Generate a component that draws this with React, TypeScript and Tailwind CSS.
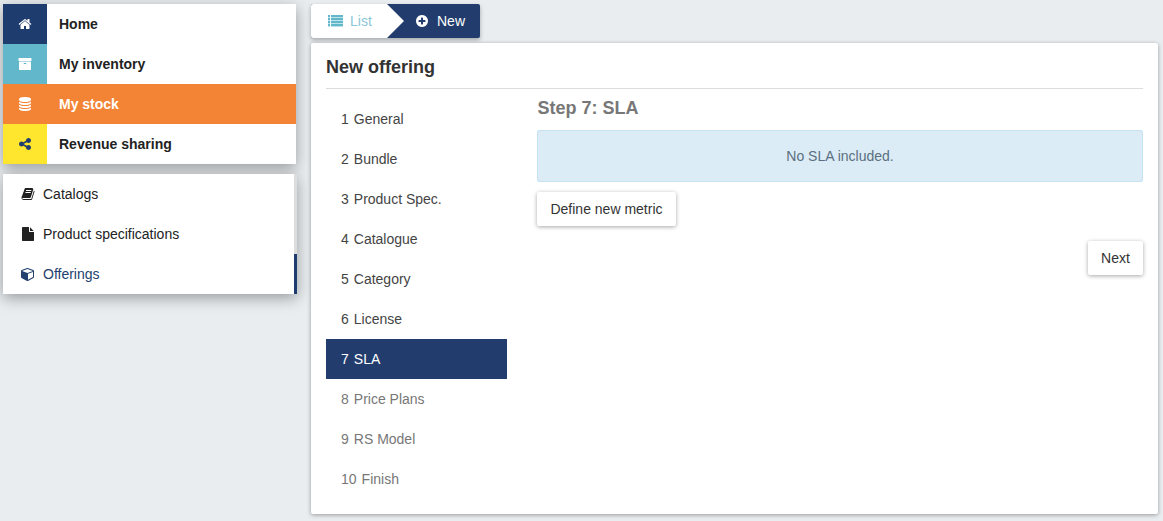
import React from "react";

// FontAwesome 4 glyphs, all on the 1792 grid
const GLYPHS = {
  home: "M1472 992v480q0 26-19 45t-45 19h-384v-384h-256v384h-384q-26 0-45-19t-19-45v-480q0-1 .5-3t.5-3l575-474 575 474q1 2 1 6zm223-69l-62 74q-8 9-21 11h-3q-13 0-21-7l-692-577-692 577q-12 8-24 7-13-2-21-11l-62-74q-8-10-7-23.5t11-21.5l719-599q32-26 76-26t76 26l244 204v-195q0-14 9-23t23-9h192q14 0 23 9t9 23v408l219 182q10 8 11 21.5t-7 23.5z",
  archive: "M1088 832q0-26-19-45t-45-19h-256q-26 0-45 19t-19 45 19 45 45 19h256q26 0 45-19t19-45zm576-192v960q0 26-19 45t-45 19h-1408q-26 0-45-19t-19-45v-960q0-26 19-45t45-19h1408q26 0 45 19t19 45zm64-448v256q0 26-19 45t-45 19h-1536q-26 0-45-19t-19-45v-256q0-26 19-45t45-19h1536q26 0 45 19t19 45z",
  database: "M896 768q237 0 443-43t325-127v170q0 69-103 128t-280 93.5-385 34.5-385-34.5-280-93.5-103-128v-170q119 84 325 127t443 43zm0 768q237 0 443-43t325-127v170q0 69-103 128t-280 93.5-385 34.5-385-34.5-280-93.5-103-128v-170q119 84 325 127t443 43zm0-384q237 0 443-43t325-127v170q0 69-103 128t-280 93.5-385 34.5-385-34.5-280-93.5-103-128v-170q119 84 325 127t443 43zm0-1152q208 0 385 34.5t280 93.5 103 128v128q0 69-103 128t-280 93.5-385 34.5-385-34.5-280-93.5-103-128v-128q0-69 103-128t280-93.5 385-34.5z",
  shareAlt: "M1344 1024q133 0 226.5 93.5t93.5 226.5-93.5 226.5-226.5 93.5-226.5-93.5-93.5-226.5q0-12 2-34l-360-180q-92 86-218 86-133 0-226.5-93.5t-93.5-226.5 93.5-226.5 226.5-93.5q126 0 218 86l360-180q-2-22-2-34 0-133 93.5-226.5t226.5-93.5 226.5 93.5 93.5 226.5-93.5 226.5-226.5 93.5q-126 0-218-86l-360 180q2 22 2 34t-2 34l360 180q92-86 218-86z",
  book: "M1703 478q40 57 18 129l-275 906q-19 64-76.5 107.5t-122.5 43.5h-923q-77 0-148.5-53.5t-99.5-131.5q-24-67-2-127 0-4 3-27t4-37q1-8-3-21.5t-3-19.5q2-11 8-21t16.5-23.5 16.5-23.5q23-38 45-91.5t30-91.5q3-10 .5-30t-.5-28q3-11 17-28t17-23q21-36 42-92t25-90q1-9-2.5-32t.5-28q4-13 22-30.5t22-22.5q19-26 42.5-84.5t27.5-96.5q1-8-3-25.5t-2-26.5q2-8 9-18t18-23 17-21q8-12 16.5-30.5t15-35 16-36 19.5-32 26.5-23.5 36-11.5 47.5 5.5l-1 3q38-9 51-9h761q74 0 114 56t18 130l-274 906q-36 119-71.5 153.5t-128.5 34.5h-869q-27 0-38 15-11 16-1 43 24 70 144 70h923q29 0 56-15.5t35-41.5l300-987q7-22 5-57 38 15 59 43zm-1064 2q-4 13 2 22.5t20 9.5h608q13 0 25.5-9.5t16.5-22.5l21-64q4-13-2-22.5t-20-9.5h-608q-13 0-25.5 9.5t-16.5 22.5zm-83 256q-4 13 2 22.5t20 9.5h608q13 0 25.5-9.5t16.5-22.5l21-64q4-13-2-22.5t-20-9.5h-608q-13 0-25.5 9.5t-16.5 22.5z",
  file: "M1152 512v-472q22 14 36 28l408 408q14 14 28 36h-472zm-128 32q0 40 28 68t68 28h544v1056q0 40-28 68t-68 28h-1344q-40 0-68-28t-28-68v-1600q0-40 28-68t68-28h800v544z",
  cube: "M896 1629l640-349v-636l-640 233v752zm-64-865l698-254-698-254-698 254zm832-252v768q0 35-18 65t-49 47l-704 384q-28 16-61 16t-61-16l-704-384q-31-17-49-47t-18-65v-768q0-40 23-73t61-47l704-256q22-8 44-8t44 8l704 256q38 14 61 47t23 73z",
  plusCircle: "M1344 960v-128q0-26-19-45t-45-19h-256v-256q0-26-19-45t-45-19h-128q-26 0-45 19t-19 45v256h-256q-26 0-45 19t-19 45v128q0 26 19 45t45 19h256v256q0 26 19 45t45 19h128q26 0 45-19t19-45v-256h256q26 0 45-19t19-45zm320-64q0 209-103 385.5t-279.5 279.5-385.5 103-385.5-103-279.5-279.5-103-385.5 103-385.5 279.5-279.5 385.5-103 385.5 103 279.5 279.5 103 385.5z",
};

type GlyphName = keyof typeof GLYPHS;

function Glyph({ name, className }: { name: GlyphName; className?: string }) {
  return (
    <svg viewBox="0 0 1792 1792" className={`fill-current ${className ?? "h-3.5 w-3.5"}`}>
      <path d={GLYPHS[name]} />
    </svg>
  );
}

function ListIcon() {
  return (
    <svg viewBox="0 0 15 12" className="mr-[7px] h-3 w-[15px] fill-[#62b7ca]">
      {[0, 3, 6, 9].map((y) => (
        <g key={y}>
          <rect x="0" y={y} width="2" height="2.4" />
          <rect x="3" y={y} width="12" height="2.4" />
        </g>
      ))}
    </svg>
  );
}

const MAIN_MENU: { label: string; icon: GlyphName; iconBox: string; row: string }[] = [
  { label: "Home", icon: "home", iconBox: "bg-[#1f3c6e] text-white", row: "bg-white text-[#222222]" },
  { label: "My inventory", icon: "archive", iconBox: "bg-[#62b7ca] text-white", row: "bg-white text-[#222222]" },
  { label: "My stock", icon: "database", iconBox: "bg-[#f38335] text-white", row: "bg-[#f38335] text-white" },
  { label: "Revenue sharing", icon: "shareAlt", iconBox: "bg-[#fee62e] text-[#223d6d]", row: "bg-white text-[#222222]" },
];

const SUB_MENU: { label: string; icon: GlyphName; active: boolean }[] = [
  { label: "Catalogs", icon: "book", active: false },
  { label: "Product specifications", icon: "file", active: false },
  { label: "Offerings", icon: "cube", active: true },
];

const STEPS = [
  { num: "1", label: "General", state: "done" },
  { num: "2", label: "Bundle", state: "done" },
  { num: "3", label: "Product Spec.", state: "done" },
  { num: "4", label: "Catalogue", state: "done" },
  { num: "5", label: "Category", state: "done" },
  { num: "6", label: "License", state: "done" },
  { num: "7", label: "SLA", state: "active" },
  { num: "8", label: "Price Plans", state: "todo" },
  { num: "9", label: "RS Model", state: "todo" },
  { num: "10", label: "Finish", state: "todo" },
];

function Sidebar() {
  return (
    <div className="w-[293px] shrink-0 flex flex-col gap-[10px]">
      {/* Main menu */}
      <div className="shadow-[0_4px_14px_rgba(0,0,0,0.35)]">
        {MAIN_MENU.map(({ label, icon, iconBox, row }) => (
          <div key={label} className={`flex h-10 items-center ${row}`}>
            <div className={`flex h-10 w-11 items-center justify-center ${iconBox}`}>
              <Glyph name={icon} />
            </div>
            <span className="ml-3 text-sm font-bold">{label}</span>
          </div>
        ))}
      </div>

      {/* Sub menu */}
      <div className="bg-white shadow-[0_4px_14px_rgba(0,0,0,0.35)] mr-[-1px]">
        {SUB_MENU.map(({ label, icon, active }) => (
          <div
            key={label}
            className={`flex h-10 items-center border-r-[3px] ${
              active ? "border-[#1f3c6e] text-[#23416e]" : "border-[#dddddd] text-[#222222]"
            }`}
          >
            <div className="flex w-[40px] justify-end pr-[8px]">
              <Glyph name={icon} />
            </div>
            <span className="text-sm">{label}</span>
          </div>
        ))}
      </div>
    </div>
  );
}

function Tabs() {
  return (
    <div className="flex h-[34px] w-[169px] rounded-[2px] bg-[#223d6d] shadow-[0_2px_4px_rgba(0,0,0,0.3)]">
      <div className="flex w-[76px] items-center rounded-l-[2px] bg-white pl-[17px] text-sm text-[#8cc7d6]">
        <ListIcon />
        List
      </div>
      {/* chevron tip of the List tab */}
      <div className="h-0 w-0 border-y-[17px] border-l-[17px] border-y-transparent border-l-white" />
      <div className="flex items-center pl-[11px] text-sm text-white">
        <Glyph name="plusCircle" className="mr-2 h-3.5 w-3.5" />
        New
      </div>
    </div>
  );
}

function StepList() {
  return (
    <div className="w-[181px] shrink-0">
      {STEPS.map(({ num, label, state }) => (
        <div
          key={num}
          className={`flex h-10 items-center gap-[5px] pl-[15px] text-sm ${
            state === "active"
              ? "bg-[#223d6d] text-white"
              : state === "todo"
                ? "text-[#777777]"
                : "text-[#444444]"
          }`}
        >
          <span>{num}</span>
          <span>{label}</span>
        </div>
      ))}
    </div>
  );
}

function ActionButton({ className, children }: { className: string; children: React.ReactNode }) {
  return (
    <button className={`h-[34px] rounded-[2px] bg-white text-sm text-[#333333] shadow-[0_1px_4px_rgba(0,0,0,0.35)] ${className}`}>
      {children}
    </button>
  );
}

export default function App() {
  return (
    <div className="flex h-[521px] w-[1163px] gap-[15px] overflow-hidden bg-[#e9edf0] pl-[3px] pt-[4px] font-['Liberation_Sans',Arial,sans-serif]">
      <Sidebar />

      <div className="w-[847px] shrink-0">
        <Tabs />

        {/* Card */}
        <div className="mt-[5px] h-[471px] rounded-[2px] bg-white px-[15px] shadow-[0_1px_4px_rgba(0,0,0,0.35)]">
          <h1 className="h-[46px] border-b border-[#dddddd] pt-[13px] text-lg leading-[22px] font-bold text-[#333333]">
            New offering
          </h1>

          <div className="mt-[10px] flex gap-[30px]">
            <StepList />

            <div className="flex-1">
              <h2 className="pl-[0.5px] text-lg leading-[18px] font-bold text-[#777777]">Step 7: SLA</h2>
              <div className="mt-[13px] flex h-[52px] items-center justify-center rounded-[2px] border border-[#c5e3f1] bg-[#dcecf7] text-sm text-[#5a6f80]">
                No SLA included.
              </div>
              <div className="mt-[10px]">
                <ActionButton className="w-[139px]">Define new metric</ActionButton>
              </div>
              <div className="mt-[15px] flex justify-end">
                <ActionButton className="w-[55px]">Next</ActionButton>
              </div>
            </div>
          </div>
        </div>
      </div>
    </div>
  );
}
